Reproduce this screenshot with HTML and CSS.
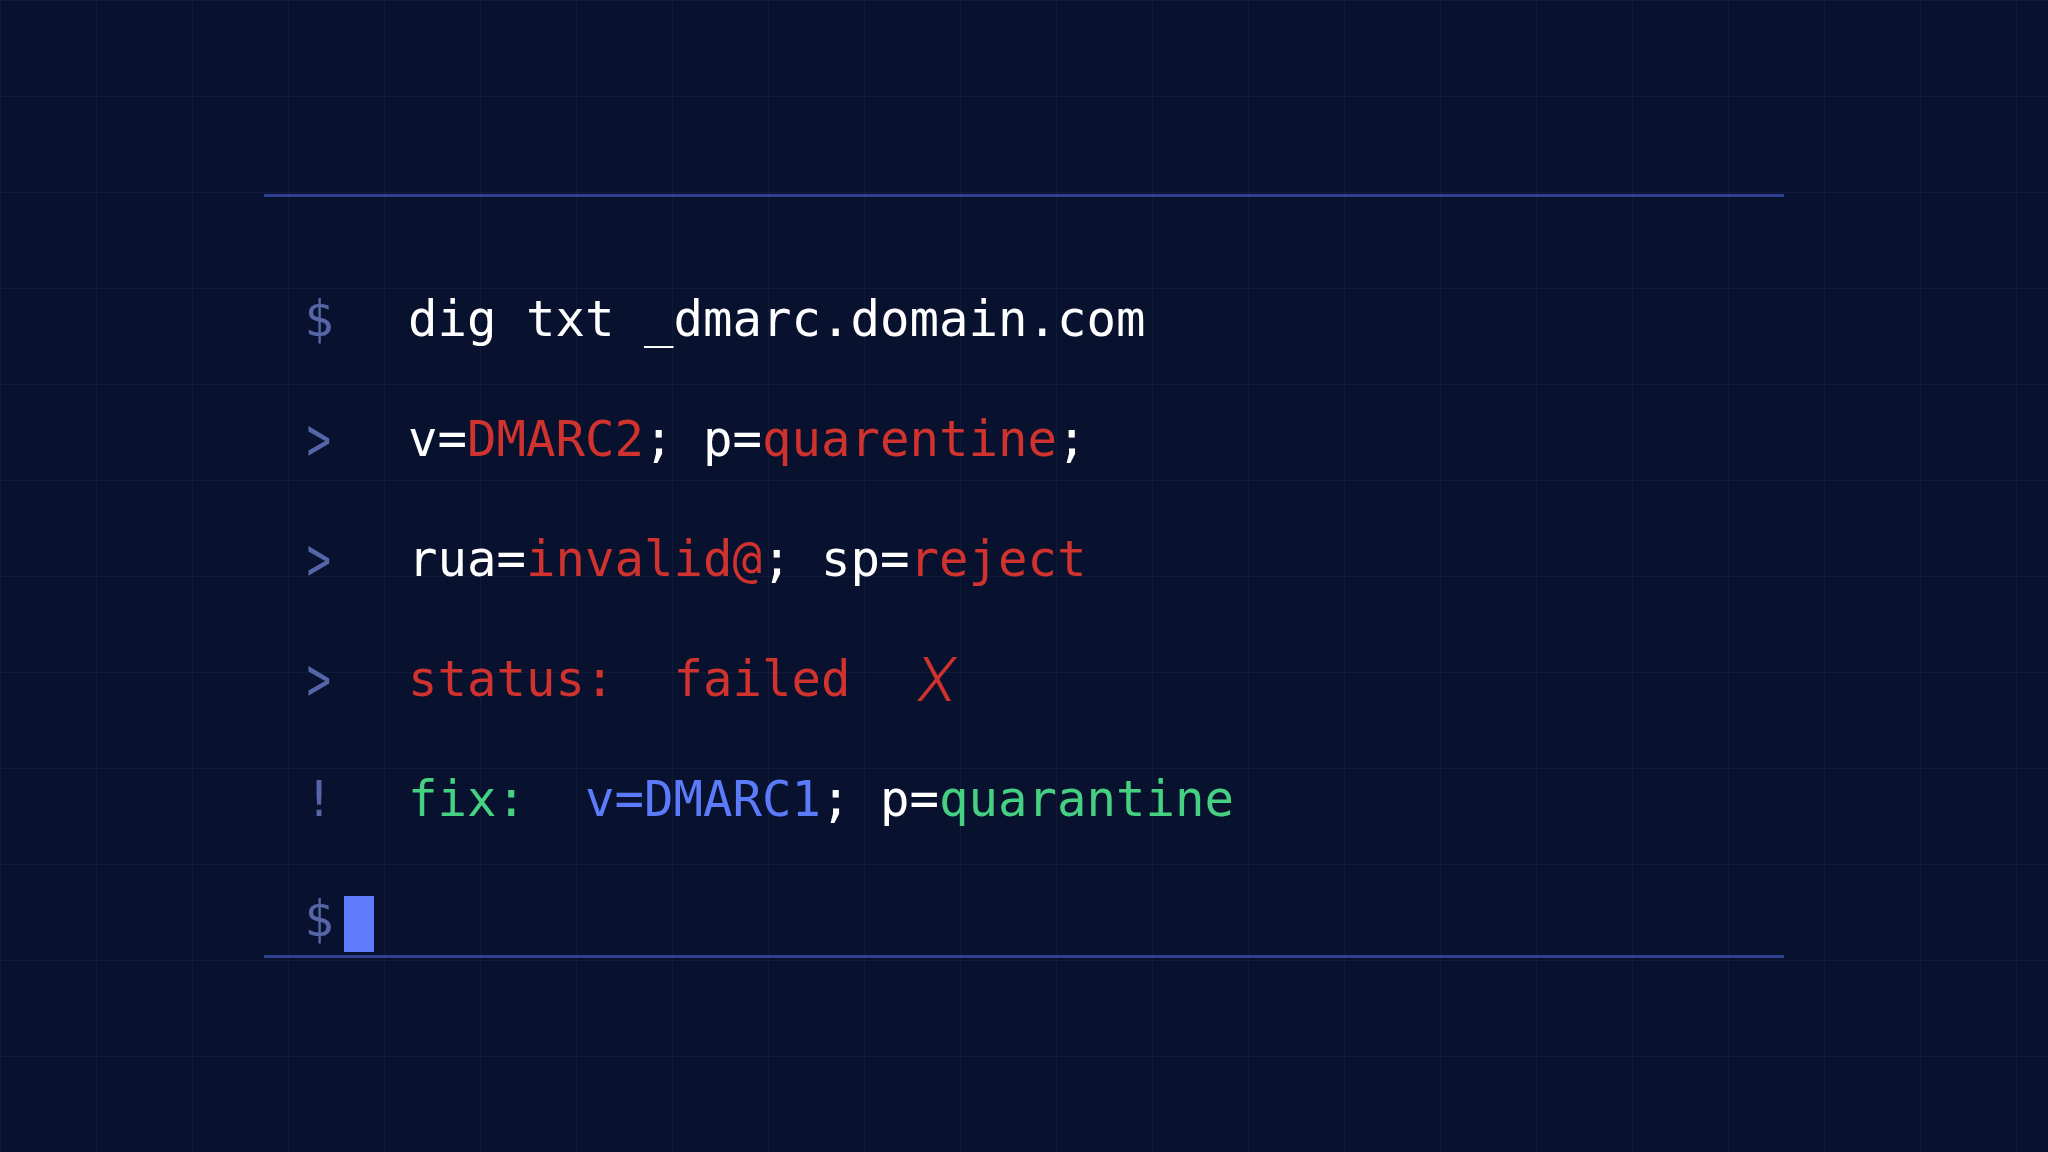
FILE: index.html
```html
<!DOCTYPE html>
<html lang="en">
<head>
<meta charset="utf-8">
<title>dig txt _dmarc.domain.com</title>
<link rel="stylesheet" href="styles.css">
</head>
<body>
<main class="stage">
  <section class="terminal">
    <div class="line"><span class="prompt">$</span><span class="text"><span class="fg">dig txt _dmarc.domain.com</span></span></div>
    <div class="line"><span class="prompt"><span class="chev">&gt;</span></span><span class="text"><span class="fg">v=</span><span class="err">DMARC2</span><span class="fg">; p=</span><span class="err">quarentine</span><span class="fg">;</span></span></div>
    <div class="line"><span class="prompt"><span class="chev">&gt;</span></span><span class="text"><span class="fg">rua=</span><span class="err">invalid@</span><span class="fg">; sp=</span><span class="err">reject</span></span></div>
    <div class="line"><span class="prompt"><span class="chev">&gt;</span></span><span class="text"><span class="err">status:  failed  </span><span class="err mark">╳</span></span></div>
    <div class="line"><span class="prompt">!</span><span class="text"><span class="ok">fix:  </span><span class="info">v=DMARC1</span><span class="fg">; p=</span><span class="ok">quarantine</span></span></div>
    <div class="line last"><span class="prompt">$</span><span class="cursor"></span></div>
  </section>
</main>
</body>
</html>
```

FILE: styles.css
```css
html, body {
  margin: 0;
  padding: 0;
}

body {
  width: 2048px;
  height: 1152px;
  overflow: hidden;
  background-color: #08122f;
  background-image:
    linear-gradient(to right, rgba(120, 140, 200, 0.07) 1px, transparent 1px),
    linear-gradient(to bottom, rgba(120, 140, 200, 0.07) 1px, transparent 1px);
  background-size: 96px 96px;
  font-family: "DejaVu Sans Mono", "Liberation Mono", monospace;
  color: #ffffff;
}

.stage {
  display: flex;
  justify-content: center;
  padding-top: 194px;
}

.terminal {
  width: 1520px;
  box-sizing: border-box;
  border-top: 3px solid #2e3e92;
  border-bottom: 3px solid #2e3e92;
  padding: 93px 0 3px 40px;
  display: flex;
  flex-direction: column;
  gap: 60px;
}

.line {
  display: flex;
  font-size: 49px;
  line-height: 60px;
  white-space: pre;
}

.prompt {
  width: 30px;
  flex: none;
  text-align: center;
  margin-right: 74px;
  color: #5565a8;
}

.chev {
  display: inline-block;
  transform: scale(0.82, 1.25);
  font-weight: 300;
}

.fg { color: #ffffff; }
.err { color: #d0322e; }
.ok { color: #45d082; }
.info { color: #5b7bfa; }

.mark {
  display: inline-block;
  margin-left: 12px;
  transform: skewX(-8deg) scaleY(0.77);
}

.last .prompt {
  margin-right: 10px;
}

.cursor {
  width: 30px;
  height: 56px;
  margin-top: 6px;
  background: #5f7cff;
  align-self: flex-start;
}
```
